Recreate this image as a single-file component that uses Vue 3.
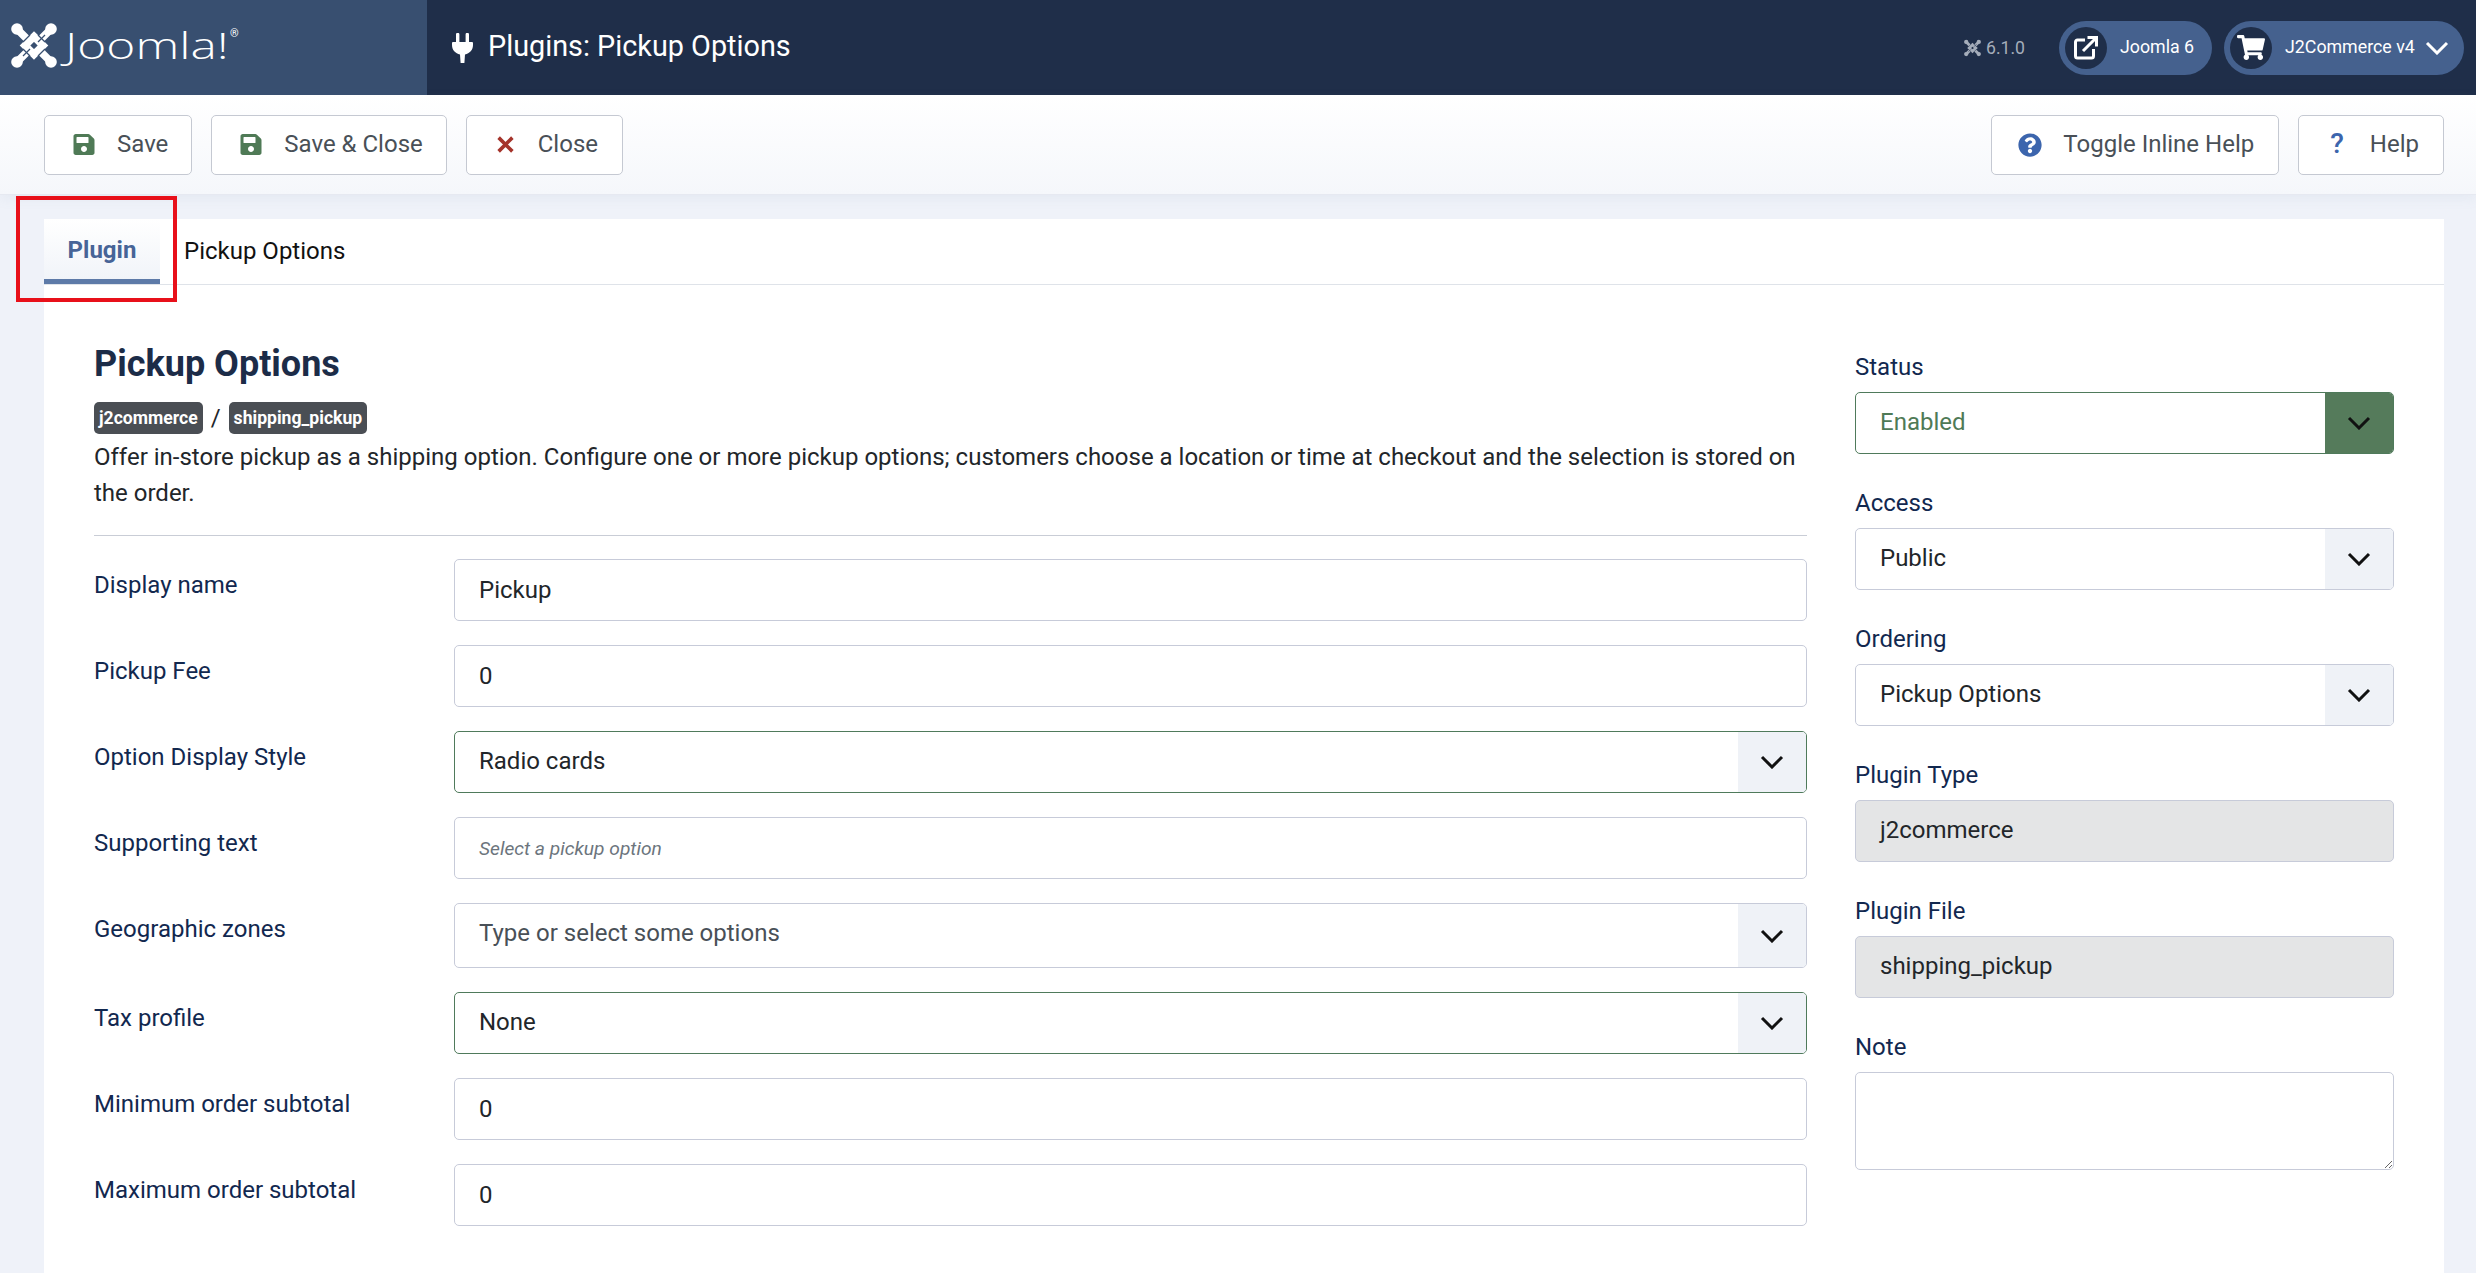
<template>
  <div class="page">
    <svg class="defs" width="0" height="0">
      <symbol id="jlogo" viewBox="0 0 46 45">
        <g fill="none" stroke="currentColor" stroke-width="7.500" stroke-linecap="round">
          <path d="M6 6 L15 15" />
          <path d="M40 6 L31 15" />
          <path d="M6 39 L15 30" />
          <path d="M40 39 L31 30" />
          <path d="M23 13.500 L32 22.500 L23 31.500 L14 22.500 Z" stroke-linecap="butt" />
        </g>
        <g fill="currentColor">
          <circle cx="6" cy="6" r="5.800" />
          <circle cx="40" cy="6" r="5.800" />
          <circle cx="6" cy="39" r="5.800" />
          <circle cx="40" cy="39" r="5.800" />
        </g>
        <g fill="none" stroke="var(--gap)" stroke-width="1.300">
          <path d="M12 19 L19 12" />
          <path d="M27 12 L34 19" />
          <path d="M34 26 L27 33" />
          <path d="M19 33 L12 26" />
          <path d="M27 19 L34 12" />
          <path d="M19 26 L12 33" />
        </g>
      </symbol>
      <symbol id="chev" viewBox="0 0 24 14">
        <path d="M2 2 L12 12 L22 2" fill="none" stroke="currentColor" stroke-width="3" />
      </symbol>
      <symbol id="save" viewBox="0 32 448 448">
        <path d="M433.941 129.941l-83.882-83.882A48 48 0 0 0 316.118 32H48C21.49 32 0 53.49 0 80v352c0 26.51 21.49 48 48 48h352c26.51 0 48-21.49 48-48V163.882a48 48 0 0 0-14.059-33.941zM224 416c-35.346 0-64-28.654-64-64 0-35.346 28.654-64 64-64s64 28.654 64 64c0 35.346-28.654 64-64 64zm96-304.52V212c0 6.627-5.373 12-12 12H76c-6.627 0-12-5.373-12-12V108c0-6.627 5.373-12 12-12h228.52c3.183 0 6.235 1.264 8.485 3.515l3.48 3.48A11.996 11.996 0 0 1 320 111.48z" fill="currentColor" />
      </symbol>
    </svg>

    <header class="topbar">
      <div class="brand">
        <svg class="brand-mark"><use href="#jlogo" /></svg>
        <span class="brand-word">Joomla!</span><span class="brand-reg">®</span>
      </div>
      <div class="page-title">
        <svg class="plug" viewBox="0 0 21 30">
          <path d="M4 1.500a1.700 1.700 0 0 1 3.400 0V9H4zM13.600 1.500a1.700 1.700 0 0 1 3.400 0V9h-3.400zM0 10a1 1 0 0 1 1-1h19a1 1 0 0 1 1 1v2c0 5-3.400 8.500-8 9.400L12.400 30H8.600L8 21.400C3.400 20.500 0 17 0 12z" fill="#fff" />
        </svg>
        <h1>Plugins: Pickup Options</h1>
      </div>
      <div class="top-right">
        <span class="version"><svg class="version-mark"><use href="#jlogo" /></svg>6.1.0</span>
        <a class="pill pill-site">
          <span class="pill-icon">
            <svg width="24" height="24" viewBox="0 0 24 24" fill="none" stroke="#fff" stroke-width="3">
              <path d="M11 4H3.500a2 2 0 0 0-2 2v14a2 2 0 0 0 2 2h14a2 2 0 0 0 2-2v-7" />
              <path d="M9 15 L21 3 M13.500 1.500H22.500V10.500" />
            </svg>
          </span>
          <span class="pill-text">Joomla 6</span>
        </a>
        <a class="pill pill-user">
          <span class="pill-icon">
            <svg width="28" height="25" viewBox="0 0 576 512">
              <path d="M528.120 301.319l47.273-208C578.806 78.301 567.391 64 551.990 64H159.208l-9.166-44.810C147.758 8.021 137.930 0 126.529 0H24C10.745 0 0 10.745 0 24v16c0 13.255 10.745 24 24 24h69.883l70.248 343.435C147.325 417.100 136 435.222 136 456c0 30.928 25.072 56 56 56s56-25.072 56-56c0-15.674-6.447-29.835-16.824-40h209.647C430.447 426.165 424 440.326 424 456c0 30.928 25.072 56 56 56s56-25.072 56-56c0-22.172-12.888-41.332-31.579-50.405l5.517-24.276c3.413-15.018-8.002-29.319-23.403-29.319H218.117l-6.545-32h293.145c11.206 0 20.920-7.754 23.403-18.681z" fill="#fff" />
            </svg>
          </span>
          <span class="pill-text">J2Commerce v4</span>
          <svg class="pill-chev"><use href="#chev" /></svg>
        </a>
      </div>
    </header>

    <div class="toolbar">
      <button class="btn btn-save"><svg class="ico-save"><use href="#save" /></svg>Save</button>
      <button class="btn btn-save"><svg class="ico-save"><use href="#save" /></svg>Save &amp; Close</button>
      <button class="btn btn-close">
        <svg class="ico-close" viewBox="0 0 16 18"><path d="M1.500 2.500 L14.500 15.500 M14.500 2.500 L1.500 15.500" stroke="#a5342b" stroke-width="3.400" fill="none" /></svg>
        Close
      </button>
      <span class="spacer"></span>
      <button class="btn btn-toggle">
        <svg class="ico-help" viewBox="0 0 512 512"><path d="M504 256c0 136.997-111.043 248-248 248S8 392.997 8 256C8 119.083 119.043 8 256 8s248 111.083 248 248zM262.655 90c-54.497 0-89.255 22.957-116.549 63.758-3.536 5.286-2.353 12.415 2.715 16.258l34.699 26.310c5.205 3.947 12.621 3.008 16.665-2.122 17.864-22.658 30.113-35.797 57.303-35.797 20.429 0 45.698 13.148 45.698 32.958 0 14.976-12.363 22.667-32.534 33.976C247.128 238.528 216 254.941 216 296v4c0 6.627 5.373 12 12 12h56c6.627 0 12-5.373 12-12v-1.333c0-28.462 83.186-29.647 83.186-106.667 0-58.002-60.165-102-116.531-102zM256 338c-25.365 0-46 20.635-46 46 0 25.364 20.635 46 46 46s46-20.636 46-46c0-25.365-20.635-46-46-46z" fill="#3c65ad" /></svg>
        Toggle Inline Help
      </button>
      <button class="btn btn-help"><span class="q">?</span>Help</button>
    </div>

    <main class="content">
      <section class="card">
        <nav class="tabs">
          <a class="tab tab-active">Plugin</a>
          <a class="tab">Pickup Options</a>
        </nav>
        <div class="columns">
          <div class="main-col">
            <h2>Pickup Options</h2>
            <div class="badges">
              <span class="badge">j2commerce</span>
              <span class="slash">/</span>
              <span class="badge">shipping_pickup</span>
            </div>
            <p class="desc">Offer in-store pickup as a shipping option. Configure one or more pickup options; customers choose a location or time at checkout and the selection is stored on the order.</p>
            <hr />
            <div v-for="row in rows" :key="row.label" class="row" :class="row.rowClass">
              <label>{{ row.label }}</label>
              <div v-if="row.arrow" class="control select" :class="{ valid: row.valid }">
                <span class="select-text" :class="{ muted: row.muted }">{{ row.value }}</span>
                <span class="arrow"><svg class="chev"><use href="#chev" /></svg></span>
              </div>
              <div v-else class="control">
                <span class="input-text" :class="{ hint: row.hint }">{{ row.value }}</span>
              </div>
            </div>
          </div>

          <aside class="side-col">
            <div v-for="f in sideFields" :key="f.label" class="field">
              <label>{{ f.label }}</label>
              <div v-if="f.arrow" class="control select" :class="{ enabled: f.enabled }">
                <span class="select-text">{{ f.value }}</span>
                <span class="arrow"><svg class="chev"><use href="#chev" /></svg></span>
              </div>
              <div v-else class="control readonly">
                <span class="select-text">{{ f.value }}</span>
              </div>
            </div>
            <div class="field">
              <label>Note</label>
              <textarea class="note"></textarea>
            </div>
          </aside>
        </div>
      </section>
    </main>

    <div class="callout"></div>
  </div>
</template>

<script setup>
const rows = [
  { label: 'Display name', value: 'Pickup' },
  { label: 'Pickup Fee', value: '0' },
  { label: 'Option Display Style', value: 'Radio cards', arrow: true, valid: true },
  { label: 'Supporting text', value: 'Select a pickup option', hint: true },
  { label: 'Geographic zones', value: 'Type or select some options', arrow: true, muted: true, rowClass: 'row-tall' },
  { label: 'Tax profile', value: 'None', arrow: true, valid: true },
  { label: 'Minimum order subtotal', value: '0' },
  { label: 'Maximum order subtotal', value: '0' }
]

const sideFields = [
  { label: 'Status', value: 'Enabled', arrow: true, enabled: true },
  { label: 'Access', value: 'Public', arrow: true },
  { label: 'Ordering', value: 'Pickup Options', arrow: true },
  { label: 'Plugin Type', value: 'j2commerce' },
  { label: 'Plugin File', value: 'shipping_pickup' }
]
</script>

<style>
html, body {
  margin: 0;
  background: #eff2f9;
}
</style>

<style scoped>
.page {
  position: relative;
  height: 1273px;
  overflow: hidden;
  font-family: Roboto, "Liberation Sans", sans-serif;
  font-size: 24px;
  line-height: 36px;
  color: #22262a;
  background: #eff2f9;
}
.defs { position: absolute; }

.topbar {
  display: flex;
  align-items: center;
  height: 95px;
  background: #1f2e49;
  color: #fff;
  --gap: #1f2e49;
}
.brand {
  display: flex;
  align-items: flex-start;
  width: 427px;
  height: 95px;
  box-sizing: border-box;
  padding: 23px 0 0 11px;
  background: #384f70;
  --gap: #384f70;
}
.brand-mark { width: 46px; height: 45px; color: #fff; }
.brand-word {
  width: 163px;
  margin-left: 8px;
  font-family: "Open Sans", sans-serif;
  font-weight: 300;
  font-size: 37px;
  line-height: 44px;
  transform: scaleX(1.34);
  transform-origin: left center;
}
.brand-reg { font-size: 11px; line-height: 14px; margin: 4px 0 0 2px; }
.page-title {
  display: flex;
  align-items: center;
  flex: 1;
  padding-left: 25px;
}
.plug { width: 21px; height: 30px; margin-right: 15px; }
h1 {
  margin: 0 0 3px;
  font-size: 28.800px;
  font-weight: 400;
  line-height: 36px;
}
.top-right {
  display: flex;
  align-items: center;
  gap: 12px;
  padding-right: 12px;
}
.version {
  display: flex;
  align-items: center;
  gap: 5px;
  margin-right: 22px;
  font-size: 17.600px;
  color: #a5adba;
}
.version-mark { width: 17px; height: 18px; color: #a5adba; }
.pill {
  display: flex;
  align-items: center;
  height: 54px;
  box-sizing: border-box;
  padding-left: 6px;
  border-radius: 27px;
  background: #45618e;
  color: #fff;
  font-size: 17.800px;
}
.pill-text { padding-bottom: 2px; }
.pill-site { width: 153px; }
.pill-user { width: 240px; }
.pill-icon {
  display: flex;
  align-items: center;
  justify-content: center;
  width: 42px;
  height: 42px;
  margin-right: 13px;
  border-radius: 50%;
  background: #1f2e49;
}
.pill-chev { width: 24px; height: 14px; margin-left: 10px; color: #fff; }

.toolbar {
  display: flex;
  align-items: center;
  gap: 19px;
  height: 100px;
  box-sizing: border-box;
  padding: 0 32px 0 44px;
  background: linear-gradient(#fff, #f5f7fb);
  border-bottom: 1px solid #e6e9f1;
  box-shadow: 0 4px 12px rgba(120, 135, 165, 0.08);
}
.spacer { flex: 1; }
.btn {
  display: flex;
  align-items: center;
  height: 60px;
  box-sizing: border-box;
  padding: 0 24px 2px 28px;
  border: 1px solid #c5c9d2;
  border-radius: 5px;
  background: #fff;
  color: #495057;
  font-family: inherit;
  font-size: 24px;
}
.btn svg { margin-top: 2px; }
.btn-save { padding-right: 23px; }
.btn-close { padding-left: 30px; }
.btn-toggle { padding-left: 26px; }
.btn-help { padding-left: 31px; }
.ico-save { width: 22px; height: 21px; margin-right: 22px; color: #4f7a56; }
.ico-close { width: 17px; height: 19px; margin-right: 24px; }
.ico-help { width: 24px; height: 24px; margin-right: 21px; }
.q {
  margin-right: 26px;
  font-size: 28px;
  font-weight: 500;
  color: #3c65ad;
}

.content {
  padding: 24px 32px 0 44px;
}
.card {
  background: #fff;
  height: 1100px;
}
.tabs {
  display: flex;
  height: 66px;
  box-sizing: border-box;
  border-bottom: 1px solid #dfe3e9;
}
.tab {
  display: flex;
  align-items: center;
  padding: 0 24px 2px 0;
  color: #111;
}
.tab-active {
  box-sizing: border-box;
  width: 116px;
  height: 65px;
  justify-content: center;
  padding: 2px 0 0;
  margin-right: 24px;
  background: linear-gradient(#fff, #f1f4f9);
  border-bottom: 5px solid #5d7aa8;
  color: #476497;
  font-weight: 700;
}

.columns {
  display: flex;
  gap: 48px;
  padding: 0 50px;
}
.main-col { width: 1713px; padding-top: 58px; }
.side-col { width: 539px; padding-top: 64px; }

h2 {
  margin: 0 0 17px;
  font-size: 36px;
  line-height: 42px;
  font-weight: 700;
  color: #1c2c48;
}
.badges {
  display: flex;
  align-items: center;
  height: 32px;
  gap: 8px;
}
.badge {
  height: 32px;
  box-sizing: border-box;
  padding: 0 5px;
  border-radius: 5px;
  background: #4a4e54;
  color: #fff;
  font-size: 17.600px;
  font-weight: 700;
  line-height: 32px;
}
.desc {
  margin: 5px 0 0;
}
hr {
  margin: 24px 0 23px;
  border: 0;
  border-top: 1px solid #c9cdd6;
}
label {
  display: block;
  color: #12284f;
}
.row {
  display: flex;
  margin-bottom: 24px;
}
.row label {
  flex: none;
  width: 360px;
  padding-top: 8px;
}
.row .control { flex: 1; }
.row-tall .control { height: 65px; }
.control {
  display: flex;
  align-items: center;
  height: 62px;
  box-sizing: border-box;
  border: 1px solid #c7cbd9;
  border-radius: 5px;
  background: #fff;
  overflow: hidden;
}
.input-text {
  flex: 1;
  padding-left: 24px;
}
.input-text.hint {
  padding-top: 2px;
  font-size: 19.200px;
  font-style: italic;
  color: #6c757d;
}
.select-text {
  flex: 1;
  padding: 0 0 2px 24px;
  color: #22262a;
}
.select-text.muted { color: #495057; padding-bottom: 6px; }
.arrow {
  display: flex;
  align-items: center;
  justify-content: center;
  width: 68px;
  align-self: stretch;
  background: #eff2f7;
}
.chev { width: 24px; height: 14px; color: #111; }
.valid { border-color: #4f7a5b; }
.enabled { border-color: #4f7a5b; }
.enabled .select-text { color: #4f7a56; }
.enabled .arrow { background: #557b5b; }

.field label { margin-bottom: 7px; }
.field { margin-bottom: 31px; }
.readonly { background: #e4e5e6; }
.note {
  display: block;
  width: 100%;
  height: 98px;
  box-sizing: border-box;
  border: 1px solid #c7cbd9;
  border-radius: 5px;
  background: #fff;
}

.callout {
  position: absolute;
  left: 16px;
  top: 196px;
  width: 161px;
  height: 106px;
  box-sizing: border-box;
  border: 4px solid #e8101a;
}
</style>
